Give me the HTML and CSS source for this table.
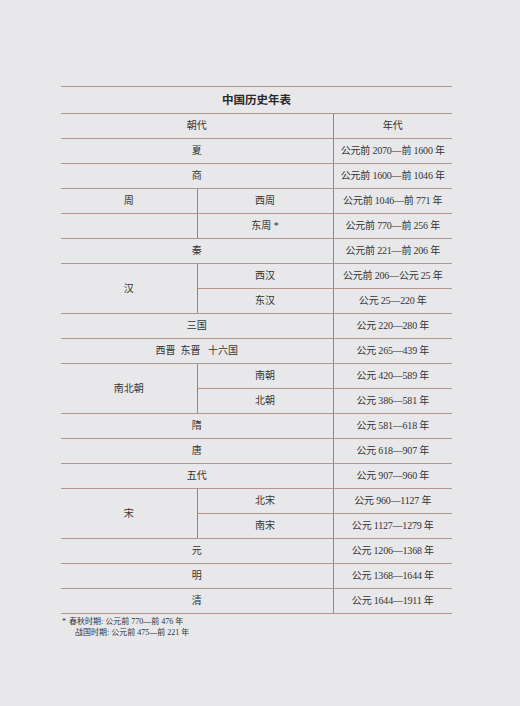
FILE: index.html
```html
<!DOCTYPE html>
<html lang="zh">
<head>
<meta charset="utf-8">
<title>中国历史年表</title>
<link rel="stylesheet" href="styles.css">
</head>
<body>
<div class="page">
<table class="chrono">
<colgroup><col class="c1"><col class="c2"><col class="c3"></colgroup>
<tr class="title-row"><td colspan="3" class="title">中国历史年表</td></tr>
<tr><td colspan="2" class="vr">朝代</td><td>年代</td></tr>
<tr><td colspan="2" class="vr">夏</td><td class="yr">公元前 2070—前 1600 年</td></tr>
<tr><td colspan="2" class="vr">商</td><td class="yr">公元前 1600—前 1046 年</td></tr>
<tr><td class="vr">周</td><td class="vr">西周</td><td class="yr">公元前 1046—前 771 年</td></tr>
<tr><td class="vr"></td><td class="vr">东周 *</td><td class="yr">公元前 770—前 256 年</td></tr>
<tr><td colspan="2" class="vr">秦</td><td class="yr">公元前 221—前 206 年</td></tr>
<tr><td rowspan="2" class="vr">汉</td><td class="vr">西汉</td><td class="yr">公元前 206—公元 25 年</td></tr>
<tr><td class="vr">东汉</td><td class="yr">公元 25—220 年</td></tr>
<tr><td colspan="2" class="vr">三国</td><td class="yr">公元 220—280 年</td></tr>
<tr><td colspan="2" class="vr">西晋&nbsp;&nbsp;东晋&nbsp;&nbsp;&nbsp;十六国</td><td class="yr">公元 265—439 年</td></tr>
<tr><td rowspan="2" class="vr">南北朝</td><td class="vr">南朝</td><td class="yr">公元 420—589 年</td></tr>
<tr><td class="vr">北朝</td><td class="yr">公元 386—581 年</td></tr>
<tr><td colspan="2" class="vr">隋</td><td class="yr">公元 581—618 年</td></tr>
<tr><td colspan="2" class="vr">唐</td><td class="yr">公元 618—907 年</td></tr>
<tr><td colspan="2" class="vr">五代</td><td class="yr">公元 907—960 年</td></tr>
<tr><td rowspan="2" class="vr">宋</td><td class="vr">北宋</td><td class="yr">公元 960—1127 年</td></tr>
<tr><td class="vr">南宋</td><td class="yr">公元 1127—1279 年</td></tr>
<tr><td colspan="2" class="vr">元</td><td class="yr">公元 1206—1368 年</td></tr>
<tr><td colspan="2" class="vr">明</td><td class="yr">公元 1368—1644 年</td></tr>
<tr><td colspan="2" class="vr">清</td><td class="yr">公元 1644—1911 年</td></tr>
</table>
<div class="notes">
<div class="note"><span class="star">*</span> 春秋时期: 公元前 770—前 476 年</div>
<div class="note indent">战国时期: 公元前 475—前 221 年</div>
</div>
</div>
</body>
</html>
```
FILE: styles.css
```css
html, body {
  margin: 0;
  padding: 0;
  background: #e8e8ea;
}
body {
  width: 520px;
  height: 706px;
  overflow: hidden;
  font-family: "Liberation Serif", "Noto Sans CJK SC", serif;
  color: #333333;
}
.page {
  padding: 86px 0 0 61px;
}
.chrono {
  border-collapse: collapse;
  table-layout: fixed;
  width: 391px;
  font-size: 10px;
}
.c1 { width: 136px; }
.c2 { width: 136px; }
.c3 { width: 119px; }
.chrono td {
  height: 24px;
  padding: 0;
  text-align: center;
  vertical-align: middle;
  border-bottom: 1px solid #b8968a;
  line-height: 12px;
  white-space: nowrap;
}
.chrono td.vr {
  border-right: 1px solid #ab7d6c;
}
.chrono td.yr {
  letter-spacing: -0.2px;
}
.title-row td {
  border-top: 1px solid #b8968a;
  height: 26px;
}
.title {
  font-size: 11.5px;
  font-weight: bold;
  color: #2a2a2a;
}
.notes {
  padding-top: 2px;
  font-size: 8px;
  line-height: 11px;
}
.note {
  padding-left: 1px;
}
.star {
  margin-right: 1px;
}
.indent {
  padding-left: 14px;
}
```
